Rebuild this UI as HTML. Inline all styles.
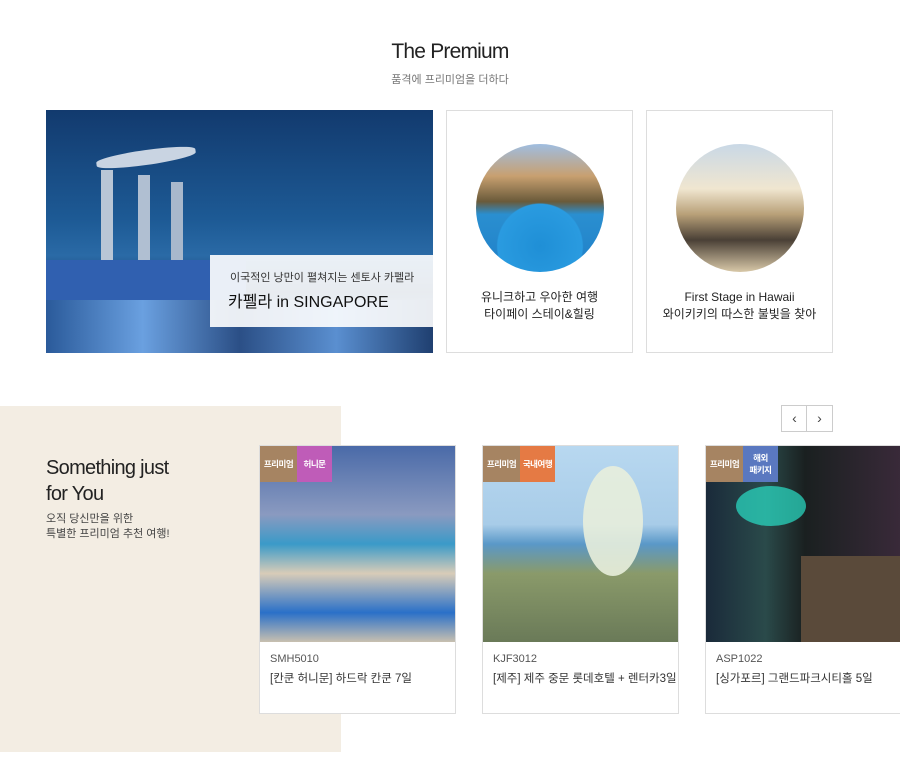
<!DOCTYPE html>
<html><head><meta charset="utf-8"><style>
*{margin:0;padding:0;box-sizing:border-box}
body{width:900px;height:784px;background:#fff;font-family:"Liberation Sans","Noto Sans CJK KR",sans-serif;position:relative;overflow:hidden;color:#222}
.abs{position:absolute}
h1{position:absolute;left:0;width:900px;top:40px;text-align:center;font-size:21px;font-weight:normal;letter-spacing:-0.8px;color:#222}
.sub{position:absolute;left:0;width:900px;top:71px;text-align:center;font-size:11px;color:#777}
.big{left:46px;top:110px;width:387px;height:243px;background:linear-gradient(180deg,#123a6e 0%,#1d5a95 45%,#2a6aa6 60%,#1a3a66 75%,#2f78b8 90%,#0f2a50 100%);overflow:hidden}
.cap{left:164px;top:145px;width:223px;height:72px;background:rgba(255,255,255,.9)}
.card{top:110px;width:187px;height:243px;border:1px solid #ddd;background:#fff;text-align:center}
.circ{position:absolute;left:29px;top:33px;width:128px;height:128px;border-radius:50%}
.card p{position:absolute;left:0;width:100%;top:178px;font-size:12px;line-height:17px;color:#222}
.beige{left:0;top:406px;width:341px;height:346px;background:#f3ede3}
.pc{top:445px;width:197px;height:269px;border:1px solid #ddd;background:#fff}
.img{position:absolute;left:0;top:0;width:100%;height:196px}
.tag{position:absolute;top:0;height:36px;color:#fff;font-size:8.5px;letter-spacing:-0.5px;display:flex;align-items:center;justify-content:center;text-align:center;line-height:12px;font-weight:bold}
.code{position:absolute;left:10px;top:207px;font-size:11px;color:#555}
.name{position:absolute;left:10px;top:224px;font-size:11.5px;color:#333}
.btn{top:405px;width:27px;height:27px;border:1px solid #ccc;background:#fff;font-size:14px;color:#444;text-align:center;line-height:24px}
</style></head><body>
<h1>The Premium</h1>
<div class="sub">품격에 프리미엄을 더하다</div>
<div class="abs big">
 <div class="abs" style="left:50px;top:40px;width:100px;height:15px;background:#c9d4e2;border-radius:50%/40%;transform:rotate(-8deg)"></div>
 <div class="abs" style="left:55px;top:60px;width:12px;height:100px;background:#b9c6d6"></div>
 <div class="abs" style="left:92px;top:65px;width:12px;height:95px;background:#b0bfd2"></div>
 <div class="abs" style="left:125px;top:72px;width:12px;height:88px;background:#a8b8cc"></div>
 <div class="abs" style="left:0;top:150px;width:200px;height:40px;background:#3060b0"></div>
 <div class="abs" style="left:0;top:190px;width:387px;height:53px;background:linear-gradient(90deg,#2a5a9a,#6aa0e0,#2b4f86,#5a8fd0,#1f3f70)"></div>
 <div class="abs cap">
  <div class="abs" style="left:20px;top:14px;font-size:11px;color:#333">이국적인 낭만이 펼쳐지는 센토사 카펠라</div>
  <div class="abs" style="left:18px;top:33px;font-size:16px;color:#111">카펠라 in SINGAPORE</div>
 </div>
</div>
<div class="abs card" style="left:446px"><div class="circ" style="background:radial-gradient(circle at 50% 80%,#1f8fd6 0%,#2a9be0 35%,transparent 36%),linear-gradient(180deg,#9fbde0 0%,#c8a070 25%,#6a5a3a 45%,#2a8fd0 55%,#1f7fc8 100%)"></div><p>유니크하고 우아한 여행<br>타이페이 스테이&amp;힐링</p></div>
<div class="abs card" style="left:646px"><div class="circ" style="background:linear-gradient(180deg,#c9d8e6 0%,#f0e6d0 35%,#b8a078 55%,#4a4036 75%,#d8c8a8 100%)"></div><p>First Stage in Hawaii<br>와이키키의 따스한 불빛을 찾아</p></div>
<div class="abs beige"></div>
<div class="abs" style="left:46px;top:455px;font-size:20px;line-height:26px;letter-spacing:-0.7px;color:#222">Something just<br>for You</div>
<div class="abs" style="left:46px;top:512px;font-size:11px;line-height:15px;color:#444">오직 당신만을 위한<br>특별한 프리미엄 추천 여행!</div>
<div class="abs btn" style="left:781px">‹</div>
<div class="abs btn" style="left:806px">›</div>
<div class="abs pc" style="left:259px"><div class="img" style="background:linear-gradient(180deg,#4a6aa8 0%,#8a9ac0 35%,#3a9ac8 50%,#d8ccb8 65%,#2a70c8 85%,#c8c0b0 100%)"></div><div class="tag" style="left:0;width:37px;background:#a68462">프리미엄</div><div class="tag" style="left:37px;width:35px;background:#bf5cb8">허니문</div><div class="code">SMH5010</div><div class="name">[칸쿤 허니문] 하드락 칸쿤 7일</div></div>
<div class="abs pc" style="left:482px"><div class="img" style="background:linear-gradient(180deg,#b8d8f0 0%,#a8cce8 40%,#5a98c8 50%,#8a9a6a 65%,#6a7a58 100%)"><div class="abs" style="left:100px;top:20px;width:60px;height:110px;border-radius:50%;background:#e8eedc;opacity:.9"></div></div><div class="tag" style="left:0;width:37px;background:#a68462">프리미엄</div><div class="tag" style="left:37px;width:35px;background:#e57a44">국내여행</div><div class="code">KJF3012</div><div class="name">[제주] 제주 중문 롯데호텔 + 렌터카3일</div></div>
<div class="abs pc" style="left:705px;width:200px"><div class="img" style="background:linear-gradient(90deg,#1a2a3a 0%,#2a4a4a 30%,#1a2020 50%,#3a2a3a 100%)"><div class="abs" style="left:30px;top:40px;width:70px;height:40px;border-radius:50%;background:#2ae0c8;opacity:.7"></div><div class="abs" style="left:95px;top:110px;width:100px;height:86px;background:#5a4a3a"></div></div><div class="tag" style="left:0;width:37px;background:#a68462">프리미엄</div><div class="tag" style="left:37px;width:35px;background:#5a78c0">해외<br>패키지</div><div class="code">ASP1022</div><div class="name">[싱가포르] 그랜드파크시티홀 5일</div></div>
</body></html>
